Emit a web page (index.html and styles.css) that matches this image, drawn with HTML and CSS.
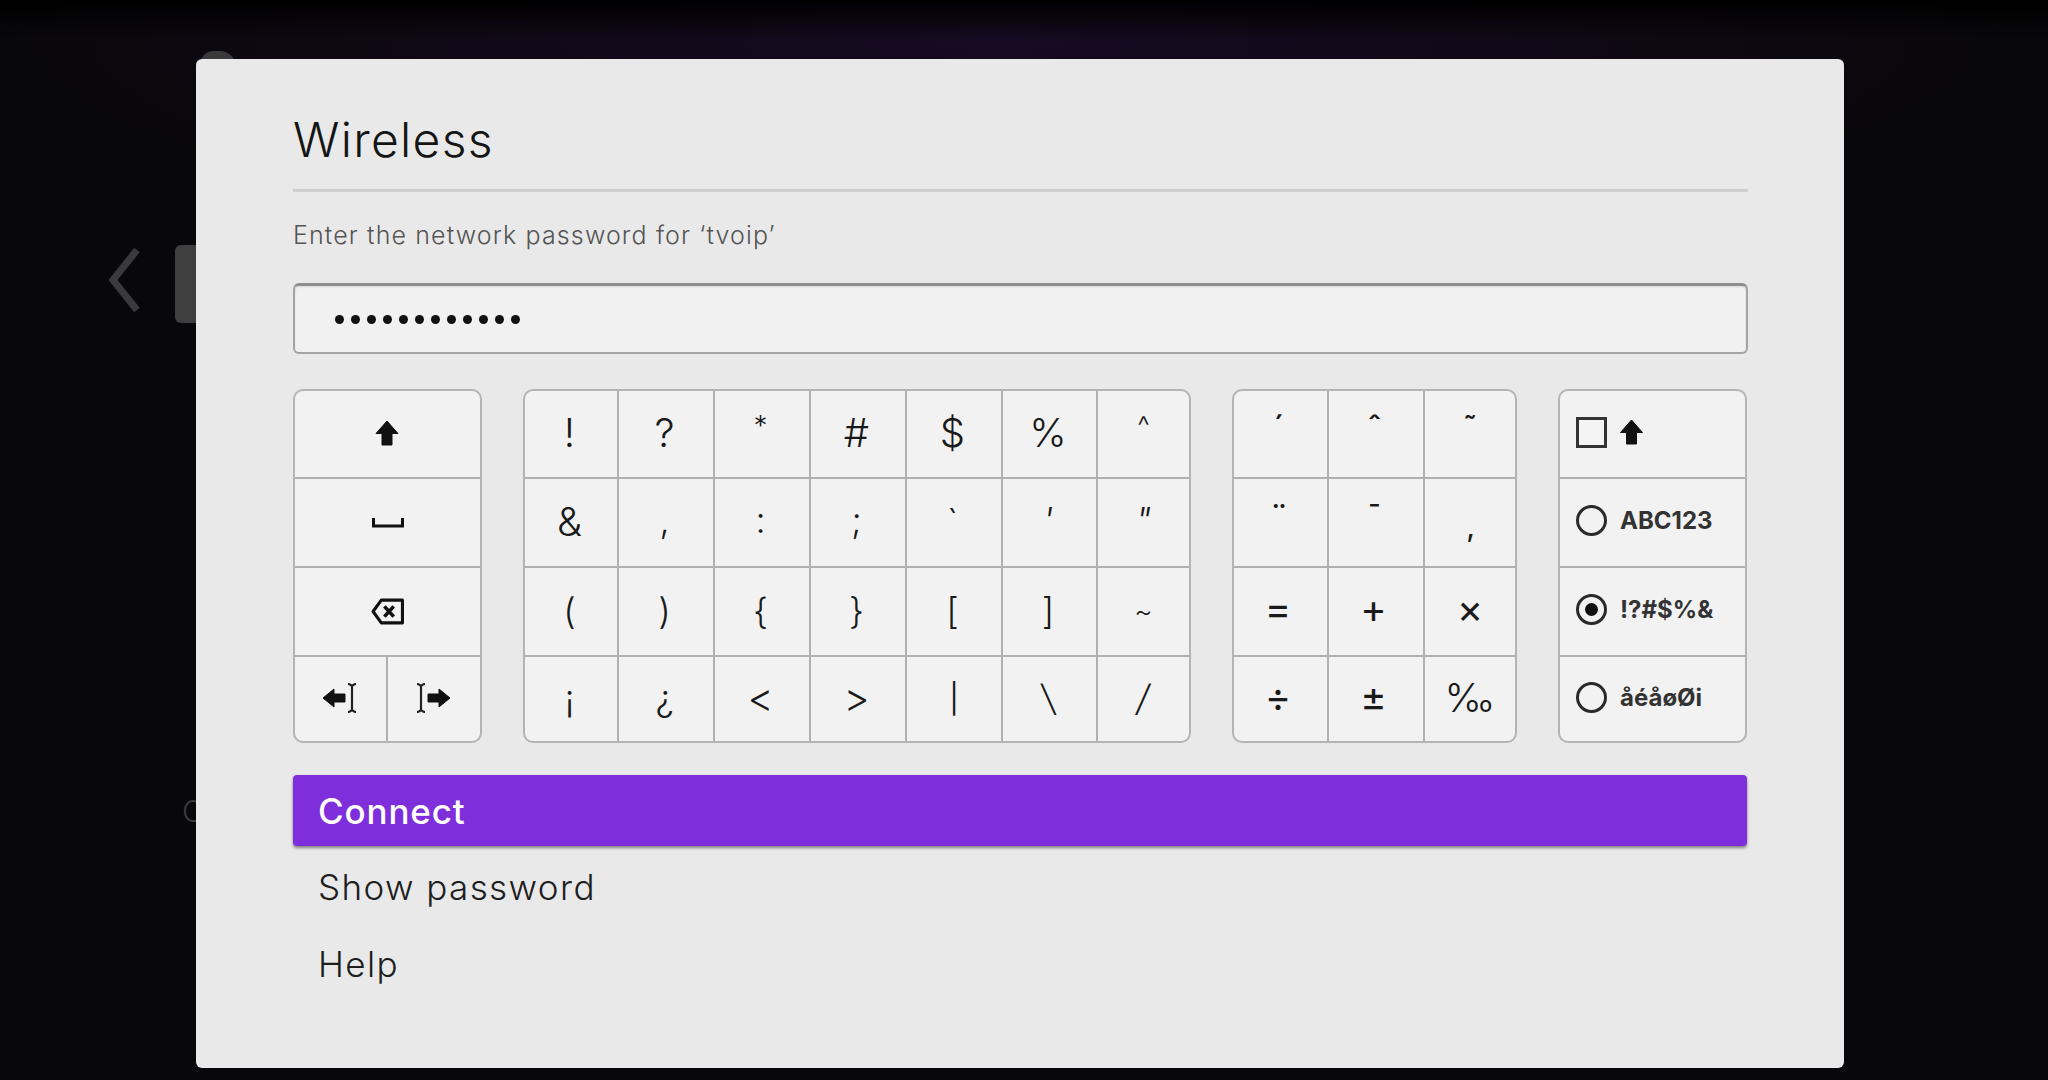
FILE: index.html
```html
<!DOCTYPE html>
<html lang="en">
<head>
<meta charset="utf-8">
<title>Wireless</title>
<link rel="stylesheet" href="styles.css">
</head>
<body>
<div class="backdrop">
  <div class="bg-tab"></div>
  <svg class="bg-chevron" viewBox="0 0 32 64"><path d="M29 2 5 32l24 30" fill="none" stroke="#3a3a3c" stroke-width="7"/></svg>
  <div class="bg-tile"></div>
  <div class="bg-letter">C</div>
</div>
<main class="dialog">
  <h1 class="title">Wireless</h1>
  <p class="prompt">Enter the network password for ‘tvoip’</p>
  <div class="field"><span class="dots"><i></i><i></i><i></i><i></i><i></i><i></i><i></i><i></i><i></i><i></i><i></i><i></i></span></div>
  <div class="keyboard">
    <div class="panel panel-edit">
      <div class="key wide shift"><svg class="ic-up" viewBox="0 0 24 26"><path d="M12 1 23 13.500h-6V25H7V13.500H1z" fill="#111" stroke="#111" stroke-linejoin="round"/></svg></div>
      <div class="key wide"><svg class="ic-space" viewBox="0 0 32 11"><path d="M1.500 1v8h29V1" fill="none" stroke="#111" stroke-width="3"/></svg></div>
      <div class="key wide"><svg class="ic-back" viewBox="0 0 32 26"><path d="M30.500 2H10L2 13l8 11h20.500z" fill="none" stroke="#111" stroke-width="3" stroke-linejoin="round"/><path d="m13 8 9 10m0-10-9 10" fill="none" stroke="#111" stroke-width="3.500"/></svg></div>
      <div class="key last"><svg class="ic-cursor" viewBox="0 0 34 30"><path d="M1 15 12 6v5h11v8H12v5z" fill="#111" stroke="#111" stroke-linejoin="round"/><path d="M26 1c2 0 3 1 4 2 1-1 2-2 4-2M30 3v24M26 29c2 0 3-1 4-2 1 1 2 2 4 2" fill="none" stroke="#222" stroke-width="2.200"/></svg></div>
      <div class="key last end"><svg class="ic-cursor" viewBox="0 0 34 30"><path d="M33 15 22 6v5H11v8h11v5z" fill="#111" stroke="#111" stroke-linejoin="round"/><path d="M0 1c2 0 3 1 4 2 1-1 2-2 4-2M4 3v24M0 29c2 0 3-1 4-2 1 1 2 2 4 2" fill="none" stroke="#222" stroke-width="2.200"/></svg></div>
    </div>
    <div class="panel panel-symbols">
      <div class="key big">!</div><div class="key big">?</div><div class="key small up">*</div><div class="key big">#</div><div class="key big">$</div><div class="key big">%</div><div class="key small up end">^</div>
      <div class="key big">&amp;</div><div class="key lift">,</div><div class="key lift">:</div><div class="key lift">;</div><div class="key">`</div><div class="key slant">'</div><div class="key slant end">"</div>
      <div class="key">(</div><div class="key">)</div><div class="key">{</div><div class="key">}</div><div class="key">[</div><div class="key">]</div><div class="key small end">~</div>
      <div class="key last">¡</div><div class="key last">¿</div><div class="key last big">&lt;</div><div class="key last big">&gt;</div><div class="key last bar">|</div><div class="key last"><span class="lean-back">\</span></div><div class="key last end"><span class="lean">/</span></div>
    </div>
    <div class="panel panel-marks">
      <div class="key tiny">´</div><div class="key tiny">ˆ</div><div class="key tiny end">˜</div>
      <div class="key tiny">¨</div><div class="key tiny">¯</div><div class="key tiny low end">‚</div>
      <div class="key math">=</div><div class="key math">+</div><div class="key math end">×</div>
      <div class="key last math">÷</div><div class="key last math">±</div><div class="key last big end">‰</div>
    </div>
    <div class="panel panel-modes">
      <div class="mode"><span class="check"></span><svg class="ic-up-small" viewBox="0 0 24 26"><path d="M12 1 23 13.500h-6V25H7V13.500H1z" fill="#111" stroke="#111" stroke-linejoin="round"/></svg></div>
      <div class="mode"><span class="radio"></span><span class="mode-label">ABC123</span></div>
      <div class="mode"><span class="radio on"></span><span class="mode-label">!?#$%&amp;</span></div>
      <div class="mode last"><span class="radio"></span><span class="mode-label">åéåøØi</span></div>
    </div>
  </div>
  <nav class="menu">
    <div class="item active">Connect</div>
    <div class="item">Show password</div>
    <div class="item">Help</div>
  </nav>
</main>
</body>
</html>
```
FILE: styles.css
```css
* { box-sizing: border-box; }
html, body { margin: 0; height: 100%; }
body {
  position: relative;
  width: 2048px;
  height: 1080px;
  overflow: hidden;
  padding: 59px 204px 12px 196px;
  font-family: Inter, "Liberation Sans", sans-serif;
  background:
    linear-gradient(#000 0, rgba(0,0,0,0) 40px),
    radial-gradient(ellipse 1000px 200px at 1000px 40px, #180a22 0, rgba(24,10,34,.5) 55%, rgba(12,8,18,0) 100%),
    #08070a;
}
.backdrop { position: absolute; inset: 0; }
.bg-tab { position: absolute; left: 200px; top: 51px; width: 36px; height: 20px; background: #3a3a3c; border-radius: 14px 16px 0 0; }
.bg-chevron { position: absolute; left: 108px; top: 248px; width: 32px; height: 64px; }
.bg-tile { position: absolute; left: 175px; top: 245px; width: 40px; height: 78px; background: #3f3f3f; border-radius: 6px; }
.bg-letter { position: absolute; left: 182px; top: 793px; font-size: 30px; color: #3a3a3a; font-weight: 300; }
.dialog {
  position: relative;
  height: 1009px;
  padding: 0 96px 0 97px;
  background: #e9e9e9;
  border-radius: 6px;
}
.title {
  margin: 0;
  height: 133px;
  padding-top: 52px;
  font-size: 48px;
  line-height: 57px;
  font-weight: 300;
  letter-spacing: 1.3px;
  color: #151515;
  border-bottom: 3px solid #cfcfcf;
}
.prompt {
  margin: 0;
  height: 91px;
  padding-top: 27px;
  font-size: 25px;
  line-height: 32px;
  font-weight: 300;
  letter-spacing: 1.12px;
  color: #555;
}
.field {
  display: flex;
  align-items: center;
  height: 71px;
  padding-left: 40px;
  background: #f1f1f1;
  border: 2px solid #a3a3a3;
  border-top: 3px solid #8e8e8e;
  border-radius: 6px;
  box-shadow: inset 0 1px 2px rgba(0,0,0,.12);
}
.dots { display: flex; gap: 7px; }
.dots i { width: 9px; height: 9px; border-radius: 50%; background: #111; }
.keyboard {
  display: flex;
  justify-content: space-between;
  height: 354px;
  margin-top: 35px;
  padding-right: 1px;
}
.panel {
  display: grid;
  grid-template-rows: 88px 89px 89px 84px;
  height: 354px;
  background: #f2f2f2;
  border: 2px solid #b4b4b4;
  border-radius: 10px;
  overflow: hidden;
}
.panel-edit { width: 189px; grid-template-columns: 93px 92px; }
.panel-symbols { width: 668px; grid-template-columns: 94px 96px 96px 96px 96px 95px 91px; }
.panel-marks { width: 285px; grid-template-columns: 95px 96px 90px; }
.panel-modes { width: 189px; grid-template-columns: 1fr; }
.key {
  display: flex;
  align-items: center;
  justify-content: center;
  padding: 0 3px 2px 0;
  font-size: 36px;
  font-weight: 300;
  line-height: 1;
  color: #1a1a1a;
  border-right: 2px solid #b0b0b0;
  border-bottom: 2px solid #b0b0b0;
}
.key.wide { grid-column: 1 / -1; border-right: 0; padding: 0; }
.key.shift { padding: 0 2px 2px 0; }
.key.end { border-right: 0; padding-right: 0; }
.key.last { border-bottom: 0; }
.key.big { font-size: 40px; }
.key.math { font-size: 40px; font-weight: 400; padding-bottom: 5px; padding-right: 5px; }
.key.math.end { padding-right: 0; }
.key.bar { font-size: 29px; font-weight: 400; padding-right: 0; }
.key.small { font-size: 28px; }
.key.up { padding-bottom: 16px; }
.key.lift { padding-bottom: 6px; }
.key.slant { font-style: italic; padding-bottom: 6px; }
.key.tiny { font-size: 32px; font-weight: 500; padding-bottom: 12px; }
.key.low { padding-bottom: 0; padding-top: 8px; font-size: 28px; }
.lean { display: inline-block; transform: skewX(-10deg); }
.lean-back { display: inline-block; transform: skewX(10deg); }
.ic-up { width: 24px; height: 26px; }
.ic-space { width: 32px; height: 11px; }
.ic-back { width: 33px; height: 27px; }
.ic-cursor { width: 34px; height: 30px; }
.mode {
  display: flex;
  align-items: center;
  gap: 13px;
  padding: 0 0 4px 16px;
  border-bottom: 2px solid #b0b0b0;
}
.mode.last { border-bottom: 0; }
.check { width: 31px; height: 31px; border: 3px solid #333; background: #f4f4f4; }
.ic-up-small { width: 25px; height: 26px; margin-left: -1px; }
.radio { position: relative; width: 31px; height: 31px; border: 3px solid #2a2a2a; border-radius: 50%; }
.radio.on::after { content: ""; position: absolute; inset: 6px; background: #111; border-radius: 50%; }
.mode-label { font-size: 24px; font-weight: 700; color: #333; }
.menu { display: flex; flex-direction: column; gap: 5.5px; margin-top: 32px; margin-right: 1px; }
.item {
  display: flex;
  align-items: center;
  height: 71px;
  padding-left: 25px;
  font-size: 35px;
  font-weight: 300;
  letter-spacing: 1.4px;
  color: #1e1e1e;
  border-radius: 4px;
}
.item.active {
  font-weight: 500;
  letter-spacing: .85px;
  color: #fff;
  background: #7e2fdb;
  box-shadow: 0 2px 3px rgba(0,0,0,.45);
}
```
